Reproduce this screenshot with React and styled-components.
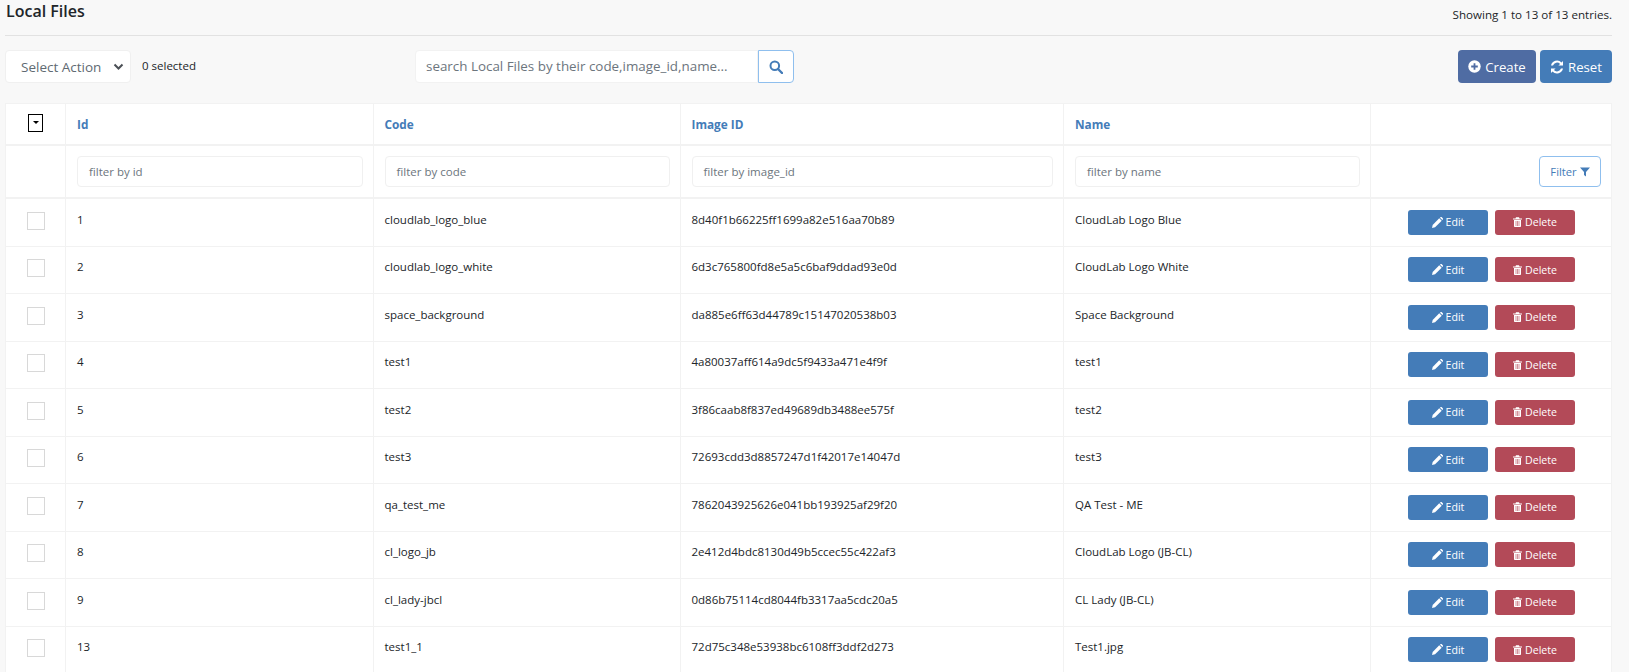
import React from 'react';
import styled, { createGlobalStyle } from 'styled-components';

const Global = createGlobalStyle`
  html, body { margin: 0; padding: 0; background: #f8f8f8; height: 672px; overflow: hidden; }
  body { font-family: "Open Sans", "Noto Sans", sans-serif; color: #212529; }
  * { box-sizing: border-box; }
`;

const Page = styled.div`
  width: 1629px;
  padding: 0 17px 0 5px;
`;
const TitleBar = styled.div`
  height: 36px;
  border-bottom: 1px solid #e2e2e2;
  display: flex;
  justify-content: space-between;
  align-items: flex-start;
`;
const Title = styled.h1`
  margin: 0 0 0 1px;
  font-size: 16px;
  line-height: 23px;
  font-weight: 600;
  color: #212529;
`;
const Entries = styled.div`
  font-size: 11.6px;
  line-height: 30px;
`;
const Toolbar = styled.div`
  height: 67px;
  padding-top: 14px;
  display: flex;
  align-items: flex-start;
  position: relative;
`;
const SelectBox = styled.div`
  width: 126px;
  height: 33px;
  background: #fff;
  border: 1px solid #f0f0f0;
  border-radius: 4px;
  display: flex;
  align-items: center;
  justify-content: space-between;
  padding: 0 6px 0 15px;
  font-size: 13.5px;
  color: #606a72;
`;
const Selected = styled.span`
  width: 284px;
  padding-left: 11px;
  font-size: 11.5px;
  line-height: 31px;
`;
const Search = styled.div`
  display: flex;
`;
const SearchInput = styled.div`
  width: 343px;
  height: 33px;
  background: #fff;
  border: 1px solid #f2f2f2;
  border-radius: 4px 0 0 4px;
  font-size: 13.4px;
  line-height: 31px;
  padding-left: 10px;
  color: #6c757d;
  white-space: nowrap;
`;
const SearchBtn = styled.div`
  width: 36px;
  height: 33px;
  background: #fff;
  border: 1px solid #8fbfee;
  border-radius: 0 4px 4px 0;
  display: flex;
  align-items: center;
  justify-content: center;
  color: #447cb8;
`;
const Actions = styled.div`
  margin-left: auto;
  display: flex;
  gap: 4px;
`;
const TopButton = styled.div`
  height: 33px;
  width: ${p => p.$w}px;
  background: ${p => p.$bg};
  border-radius: 4px;
  color: #fff;
  font-size: 13.2px;
  display: flex;
  align-items: center;
  justify-content: center;
  gap: 4px;
`;
const Table = styled.div`
  width: 1607px;
  background: #fff;
  border: 1px solid #f2f2f2;
`;
const Row = styled.div`
  display: grid;
  grid-template-columns: 59px 307.5px 307px 383.5px 307px 1fr;
  height: ${p => p.$h}px;
  border-bottom: ${p => p.$thick ? 2 : 1}px solid #f2f2f2;
`;
const Cell = styled.div`
  display: flex;
  align-items: center;
  padding: 0 10px ${p => p.$lift ? 6 : 0}px 11px;
  border-left: ${p => p.$first ? 0 : 1}px solid #f2f2f2;
  font-size: 11.5px;
  color: #212529;
  white-space: nowrap;
  min-width: 0;
`;
const CheckCell = styled(Cell)`
  justify-content: center;
  padding: 0 0 3px;
`;
const Head = styled(Cell)`
  font-weight: 700;
  color: #447cb8;
  font-size: 11.8px;
`;
const HeadCheck = styled.div`
  width: 15px;
  height: 18px;
  border: 1px solid #000;
  background: #fff;
  display: flex;
  align-items: center;
  justify-content: center;
  &::after {
    content: "";
    border-left: 3px solid transparent;
    border-right: 3px solid transparent;
    border-top: 3px solid #000;
  }
`;
const Check = styled.div`
  width: 18px;
  height: 18px;
  border: 1px solid #d8d8d8;
  background: #fff;
`;
const FilterInput = styled.div`
  width: 100%;
  height: 31px;
  border: 1px solid #f0f0f0;
  border-radius: 4px;
  font-size: 11.5px;
  line-height: 29px;
  padding-left: 11px;
  color: #6c757d;
`;
const FilterCell = styled(Cell)`
  justify-content: flex-end;
`;
const FilterBtn = styled.div`
  width: 62px;
  height: 31px;
  border: 1px solid #8fbfee;
  border-radius: 4px;
  color: #447cb8;
  font-size: 11.2px;
  display: flex;
  align-items: center;
  justify-content: center;
  gap: 3px;
  background: #fff;
`;
const ActionCell = styled(Cell)`
  padding: 0 0 0 37px;
  gap: 7px;
`;
const RowBtn = styled.div`
  width: 80px;
  height: 25px;
  background: ${p => p.$bg};
  border-radius: 3px;
  color: #fff;
  font-size: 10.6px;
  display: flex;
  align-items: center;
  justify-content: center;
  gap: 3px;
`;

const Chevron = () => (
  <svg width="11" height="8" viewBox="0 0 11 8"><path d="M1.5 1.5 5.5 5.5 9.5 1.5" fill="none" stroke="#4a4f55" strokeWidth="2" /></svg>
);
const SearchIcon = () => (
  <svg width="14" height="14" viewBox="0 0 14 14"><circle cx="5.8" cy="5.8" r="4.3" fill="none" stroke="currentColor" strokeWidth="2" /><path d="M9 9 13 13" stroke="currentColor" strokeWidth="2.4" strokeLinecap="round" /></svg>
);
const PlusCircle = () => (
  <svg width="13" height="13" viewBox="0 0 13 13"><circle cx="6.5" cy="6.5" r="6.2" fill="#fff" /><path d="M6.5 3.2v6.6M3.2 6.5h6.6" stroke="#4f6ca3" strokeWidth="1.8" /></svg>
);
const Refresh = () => (
  <svg width="14" height="14" viewBox="0 0 14 14" fill="#fff"><path d="M13 1v4.6H8.4l1.7-1.7A4.3 4.3 0 0 0 3 5.5H1A6.2 6.2 0 0 1 11.5 2.5z" /><path d="M1 13V8.4h4.6L3.9 10.1A4.3 4.3 0 0 0 11 8.5h2A6.2 6.2 0 0 1 2.5 11.5z" /></svg>
);
const Funnel = () => (
  <svg width="10" height="10" viewBox="0 0 10 10"><path d="M0 .5h10L6 5v4.5L4 8V5z" fill="currentColor" /></svg>
);
const Pencil = () => (
  <svg width="11" height="11" viewBox="0 0 10 10" fill="#fff"><path d="M0 10 .6 7.2 6.6 1.2 8.8 3.4 2.8 9.4z" /><path d="M7.2.6 8 0q.4-.2.7 0L10 1.3q.2.3 0 .7L9.4 2.8z" /></svg>
);
const Trash = () => (
  <svg width="9" height="10" viewBox="0 0 9 10" fill="#fff"><path d="M0 1.6h9v1H0zM3 .2h3l.5 1.4h-4z" /><path fillRule="evenodd" d="M1 3h7v6.2q0 .8-.8.8H1.8Q1 10 1 9.2zM2.7 4v5h.6V4zM4.2 4v5h.6V4zM5.7 4v5h.6V4z" /></svg>
);

const data = [
  ['1', 'cloudlab_logo_blue', '8d40f1b66225ff1699a82e516aa70b89', 'CloudLab Logo Blue'],
  ['2', 'cloudlab_logo_white', '6d3c765800fd8e5a5c6baf9ddad93e0d', 'CloudLab Logo White'],
  ['3', 'space_background', 'da885e6ff63d44789c15147020538b03', 'Space Background'],
  ['4', 'test1', '4a80037aff614a9dc5f9433a471e4f9f', 'test1'],
  ['5', 'test2', '3f86caab8f837ed49689db3488ee575f', 'test2'],
  ['6', 'test3', '72693cdd3d8857247d1f42017e14047d', 'test3'],
  ['7', 'qa_test_me', '7862043925626e041bb193925af29f20', 'QA Test - ME'],
  ['8', 'cl_logo_jb', '2e412d4bdc8130d49b5ccec55c422af3', 'CloudLab Logo (JB-CL)'],
  ['9', 'cl_lady-jbcl', '0d86b75114cd8044fb3317aa5cdc20a5', 'CL Lady (JB-CL)'],
  ['13', 'test1_1', '72d75c348e53938bc6108ff3ddf2d273', 'Test1.jpg'],
];

export default function App() {
  return (
    <Page>
      <Global />
      <TitleBar>
        <Title>Local Files</Title>
        <Entries>Showing 1 to 13 of 13 entries.</Entries>
      </TitleBar>
      <Toolbar>
        <SelectBox>Select Action <Chevron /></SelectBox>
        <Selected>0 selected</Selected>
        <Search>
          <SearchInput>search Local Files by their code,image_id,name...</SearchInput>
          <SearchBtn><SearchIcon /></SearchBtn>
        </Search>
        <Actions>
          <TopButton $w={78} $bg="#4f6ca3"><PlusCircle /> Create</TopButton>
          <TopButton $w={72} $bg="#447cb8"><Refresh /> Reset</TopButton>
        </Actions>
      </Toolbar>
      <Table>
        <Row $h={42} $thick>
          <CheckCell $first><HeadCheck /></CheckCell>
          <Head>Id</Head><Head>Code</Head><Head>Image ID</Head><Head>Name</Head><Head />
        </Row>
        <Row $h={53} $thick>
          <Cell $first />
          <Cell><FilterInput>filter by id</FilterInput></Cell>
          <Cell><FilterInput>filter by code</FilterInput></Cell>
          <Cell><FilterInput>filter by image_id</FilterInput></Cell>
          <Cell><FilterInput>filter by name</FilterInput></Cell>
          <FilterCell><FilterBtn>Filter <Funnel /></FilterBtn></FilterCell>
        </Row>
        {data.map(r => (
          <Row key={r[0]} $h={47.5}>
            <CheckCell $first><Check /></CheckCell>
            {r.map((v, i) => <Cell key={i} $lift>{v}</Cell>)}
            <ActionCell>
              <RowBtn $bg="#447cb8"><Pencil /> Edit</RowBtn>
              <RowBtn $bg="#b34a58"><Trash /> Delete</RowBtn>
            </ActionCell>
          </Row>
        ))}
      </Table>
    </Page>
  );
}
